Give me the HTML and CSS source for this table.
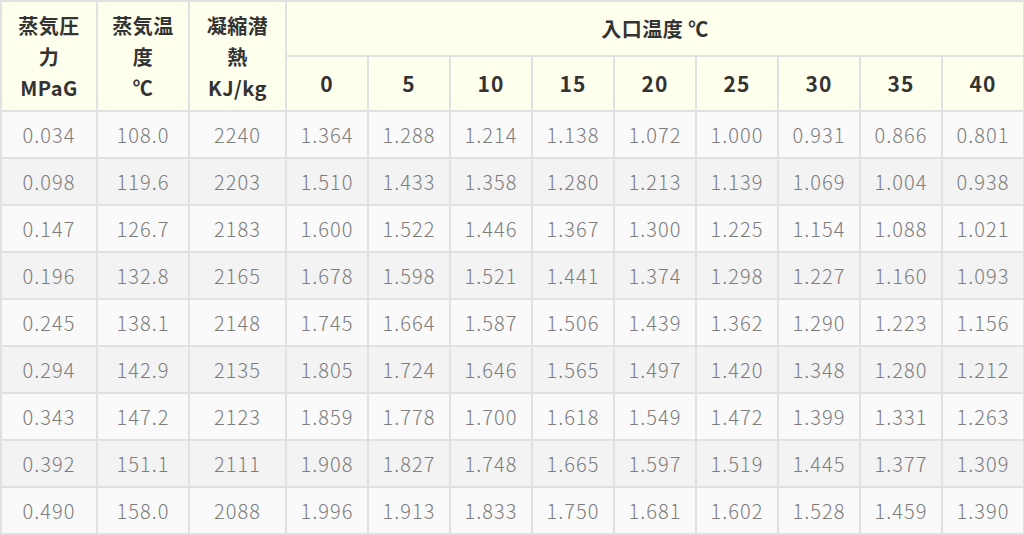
FILE: index.html
```html
<!DOCTYPE html>
<html lang="ja">
<head>
<meta charset="utf-8">
<link rel="stylesheet" href="styles.css">
</head>
<body>
<table class="steam">
  <colgroup>
    <col class="c1"><col class="c2"><col class="c3">
    <col class="cn"><col class="cn"><col class="cn"><col class="cn"><col class="cn"><col class="cn"><col class="cn"><col class="cn"><col class="cn">
  </colgroup>
  <thead>
    <tr class="h1">
      <th rowspan="2">蒸気圧<br>力<br>MPaG</th>
      <th rowspan="2">蒸気温<br>度<br>℃</th>
      <th rowspan="2">凝縮潜<br>熱<br>KJ/kg</th>
      <th colspan="9">入口温度 ℃</th>
    </tr>
    <tr class="h2">
      <th>0</th><th>5</th><th>10</th><th>15</th><th>20</th><th>25</th><th>30</th><th>35</th><th>40</th>
    </tr>
  </thead>
  <tbody>
    <tr><td>0.034</td><td>108.0</td><td>2240</td><td>1.364</td><td>1.288</td><td>1.214</td><td>1.138</td><td>1.072</td><td>1.000</td><td>0.931</td><td>0.866</td><td>0.801</td></tr>
    <tr><td>0.098</td><td>119.6</td><td>2203</td><td>1.510</td><td>1.433</td><td>1.358</td><td>1.280</td><td>1.213</td><td>1.139</td><td>1.069</td><td>1.004</td><td>0.938</td></tr>
    <tr><td>0.147</td><td>126.7</td><td>2183</td><td>1.600</td><td>1.522</td><td>1.446</td><td>1.367</td><td>1.300</td><td>1.225</td><td>1.154</td><td>1.088</td><td>1.021</td></tr>
    <tr><td>0.196</td><td>132.8</td><td>2165</td><td>1.678</td><td>1.598</td><td>1.521</td><td>1.441</td><td>1.374</td><td>1.298</td><td>1.227</td><td>1.160</td><td>1.093</td></tr>
    <tr><td>0.245</td><td>138.1</td><td>2148</td><td>1.745</td><td>1.664</td><td>1.587</td><td>1.506</td><td>1.439</td><td>1.362</td><td>1.290</td><td>1.223</td><td>1.156</td></tr>
    <tr><td>0.294</td><td>142.9</td><td>2135</td><td>1.805</td><td>1.724</td><td>1.646</td><td>1.565</td><td>1.497</td><td>1.420</td><td>1.348</td><td>1.280</td><td>1.212</td></tr>
    <tr><td>0.343</td><td>147.2</td><td>2123</td><td>1.859</td><td>1.778</td><td>1.700</td><td>1.618</td><td>1.549</td><td>1.472</td><td>1.399</td><td>1.331</td><td>1.263</td></tr>
    <tr><td>0.392</td><td>151.1</td><td>2111</td><td>1.908</td><td>1.827</td><td>1.748</td><td>1.665</td><td>1.597</td><td>1.519</td><td>1.445</td><td>1.377</td><td>1.309</td></tr>
    <tr><td>0.490</td><td>158.0</td><td>2088</td><td>1.996</td><td>1.913</td><td>1.833</td><td>1.750</td><td>1.681</td><td>1.602</td><td>1.528</td><td>1.459</td><td>1.390</td></tr>
  </tbody>
</table>
</body>
</html>
```
FILE: styles.css
```css
html, body {
  margin: 0;
  padding: 0;
  background: #ffffff;
}

.steam {
  border-collapse: collapse;
  table-layout: fixed;
  width: 1023px;
  font-family: "Noto Sans CJK JP", "Noto Sans", sans-serif;
}

.c1 { width: 96px; }
.c2 { width: 92px; }
.c3 { width: 97px; }
.cn { width: 82px; }

.steam th,
.steam td {
  border: 2px solid #e1e1e1;
  padding: 0;
  text-align: center;
  vertical-align: middle;
}

.steam th {
  background: #ffffee;
  color: #333333;
  font-weight: 700;
  font-size: 20px;
  line-height: 31px;
  letter-spacing: 0.5px;
}

.h1 th { height: 53px; }
.h2 th { height: 53px; font-size: 21px; letter-spacing: 1px; }

.steam td {
  height: 45px;
  color: #7d7d7d;
  font-size: 20px;
  font-weight: 300;
  line-height: 24px;
  letter-spacing: 1px;
}

.steam tbody tr:nth-child(odd) td { background: #fafafa; }
.steam tbody tr:nth-child(even) td { background: #f3f3f3; }
```
